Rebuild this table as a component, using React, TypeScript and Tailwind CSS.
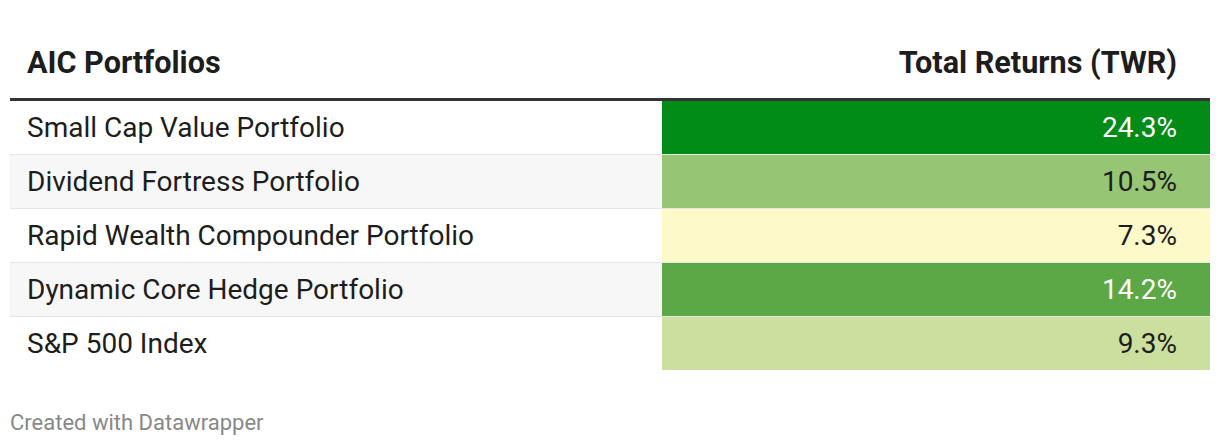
import React from "react";

const rows = [
  { name: "Small Cap Value Portfolio", value: "24.3%", bg: "bg-[#018b17]", fg: "text-white", alt: false },
  { name: "Dividend Fortress Portfolio", value: "10.5%", bg: "bg-[#96c574]", fg: "text-[#1d1d1d]", alt: true },
  { name: "Rapid Wealth Compounder Portfolio", value: "7.3%", bg: "bg-[#fef9c9]", fg: "text-[#1d1d1d]", alt: false },
  { name: "Dynamic Core Hedge Portfolio", value: "14.2%", bg: "bg-[#5ca846]", fg: "text-white", alt: true },
  { name: "S&P 500 Index", value: "9.3%", bg: "bg-[#cbdf9e]", fg: "text-[#1d1d1d]", alt: false },
];

export default function App() {
  return (
    <div className="w-[1220px] h-[446px] bg-white px-[10px] text-[#1d1d1d]" style={{ fontFamily: "Roboto, 'Liberation Sans', sans-serif" }}>
      <div className="flex items-end h-[98px] pb-[17px] text-[30.6px] leading-[36px] font-bold">
        <div className="w-[652px] pl-[17px]">AIC Portfolios</div>
        <div className="flex-1 text-right pr-[33px]">Total Returns (TWR)</div>
      </div>
      <div className="h-[3px] bg-[#333333]" />
      {rows.map((r, i) => (
        <div
          key={r.name}
          className={`flex text-[28px] ${i < rows.length - 1 ? "h-[54px] border-b border-[#e6e6e6]" : "h-[53px]"} ${r.alt ? "bg-[#f7f7f7]" : "bg-white"}`}
        >
          <div className="w-[652px] pl-[17px] flex items-center pt-[1px]">{r.name}</div>
          <div className={`flex-1 flex items-center justify-end pr-[33px] pt-[1px] ${r.bg} ${r.fg}`}>{r.value}</div>
        </div>
      ))}
      <div className="mt-[40px] text-[22px] leading-[26px] text-[#888888]">Created with Datawrapper</div>
    </div>
  );
}
